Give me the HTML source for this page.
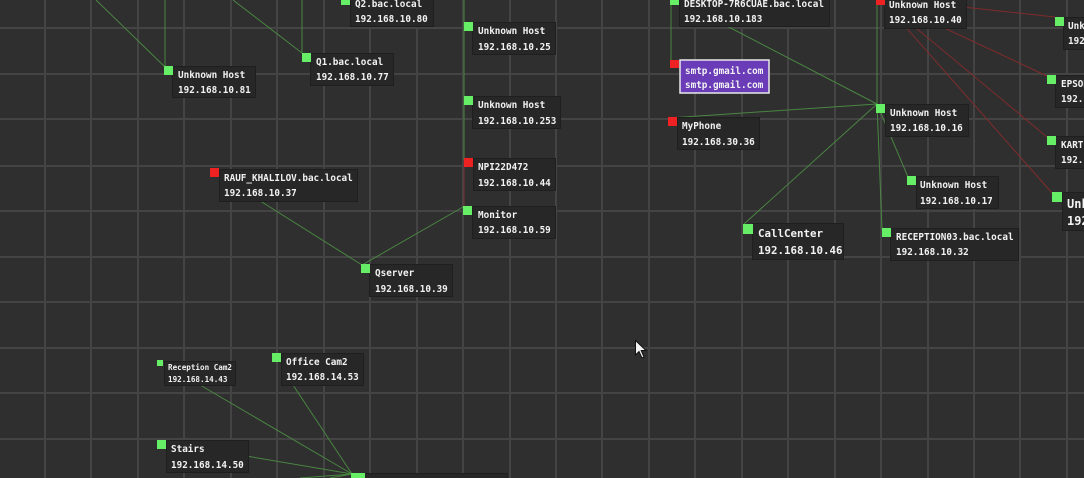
<!DOCTYPE html>
<html><head><meta charset="utf-8"><style>
html,body{margin:0;padding:0;background:#2f2f2f;width:1084px;height:478px;overflow:hidden}
svg{display:block}
text{font-family:"DejaVu Sans Mono","Liberation Mono",monospace;font-weight:bold;fill:#f2f2f2;font-size:9.3px}
.b{fill:#272727;stroke:#1f1f1f;stroke-width:1}
.g{fill:#66ee66}.r{fill:#ee2222}
.eg{stroke:#4a8542;stroke-width:1;fill:none}
.er{stroke:#7f2c2c;stroke-width:1;fill:none}
.L{font-size:10.8px}
.S{font-size:7.6px}
</style></head><body>
<svg width="1084" height="478" viewBox="0 0 1084 478">
<g stroke="#444" stroke-width="2">
<line x1="45" y1="0" x2="45" y2="478"/><line x1="91" y1="0" x2="91" y2="478"/><line x1="138" y1="0" x2="138" y2="478"/><line x1="184" y1="0" x2="184" y2="478"/><line x1="231" y1="0" x2="231" y2="478"/><line x1="277" y1="0" x2="277" y2="478"/><line x1="324" y1="0" x2="324" y2="478"/><line x1="370" y1="0" x2="370" y2="478"/><line x1="417" y1="0" x2="417" y2="478"/><line x1="463" y1="0" x2="463" y2="478"/><line x1="510" y1="0" x2="510" y2="478"/><line x1="556" y1="0" x2="556" y2="478"/><line x1="602" y1="0" x2="602" y2="478"/><line x1="649" y1="0" x2="649" y2="478"/><line x1="695" y1="0" x2="695" y2="478"/><line x1="742" y1="0" x2="742" y2="478"/><line x1="788" y1="0" x2="788" y2="478"/><line x1="835" y1="0" x2="835" y2="478"/><line x1="881" y1="0" x2="881" y2="478"/><line x1="928" y1="0" x2="928" y2="478"/><line x1="974" y1="0" x2="974" y2="478"/><line x1="1020" y1="0" x2="1020" y2="478"/><line x1="1067" y1="0" x2="1067" y2="478"/>
<line x1="0" y1="28" x2="1084" y2="28"/><line x1="0" y1="74" x2="1084" y2="74"/><line x1="0" y1="119" x2="1084" y2="119"/><line x1="0" y1="166" x2="1084" y2="166"/><line x1="0" y1="211" x2="1084" y2="211"/><line x1="0" y1="257" x2="1084" y2="257"/><line x1="0" y1="302" x2="1084" y2="302"/><line x1="0" y1="348" x2="1084" y2="348"/><line x1="0" y1="393" x2="1084" y2="393"/><line x1="0" y1="439" x2="1084" y2="439"/>
</g>
<g class="eg">
<line x1="96" y1="0" x2="165" y2="67"/><line x1="165" y1="0" x2="165" y2="67"/>
<line x1="233" y1="0" x2="302" y2="53"/><line x1="302" y1="0" x2="302" y2="53"/>
<line x1="464" y1="0" x2="464" y2="206"/>
<line x1="463" y1="207" x2="362" y2="265"/><line x1="211" y1="170" x2="362" y2="265"/>
<line x1="671" y1="0" x2="671" y2="61"/><line x1="671" y1="-3" x2="877" y2="104"/>
<line x1="669" y1="118" x2="877" y2="104"/><line x1="744" y1="224" x2="877" y2="104"/>
<line x1="877" y1="104" x2="908" y2="177"/><line x1="877" y1="104" x2="882" y2="229"/><line x1="877" y1="0" x2="877" y2="104"/>
<line x1="158" y1="441" x2="352" y2="474"/><line x1="200" y1="385" x2="352" y2="474"/><line x1="293" y1="385" x2="352" y2="474"/><line x1="300" y1="478" x2="352" y2="474"/><line x1="330" y1="478" x2="352" y2="474"/>
</g>
<g class="er">
<line x1="880" y1="-2" x2="1055" y2="17"/><line x1="880" y1="-2" x2="1047" y2="76"/><line x1="880" y1="-2" x2="1047" y2="137"/><line x1="880" y1="-2" x2="1052" y2="193"/>
<line x1="464" y1="160" x2="464" y2="206" stroke="#7a3030"/>
</g>
<rect class="b" x="172.5" y="66.5" width="83" height="31"/><rect class="g" x="164" y="66" width="9" height="9"/><text x="178" y="78">Unknown Host</text><text x="178" y="93">192.168.10.81</text>
<rect class="b" x="310.5" y="53.5" width="83" height="32"/><rect class="g" x="302" y="53" width="9" height="9"/><text x="316" y="65">Q1.bac.local</text><text x="316" y="80">192.168.10.77</text>
<rect class="b" x="350.5" y="-6.5" width="83" height="33"/><rect class="g" x="341" y="-4" width="9" height="9"/><text x="355" y="7">Q2.bac.local</text><text x="355" y="22">192.168.10.80</text>
<rect class="b" x="472.5" y="22.5" width="83" height="32"/><rect class="g" x="464" y="22" width="9" height="9"/><text x="478" y="34">Unknown Host</text><text x="478" y="50">192.168.10.25</text>
<rect class="b" x="472.5" y="96.5" width="88" height="32"/><rect class="g" x="464" y="96" width="9" height="9"/><text x="478" y="108">Unknown Host</text><text x="478" y="124">192.168.10.253</text>
<rect class="b" x="473.5" y="158.5" width="82" height="32"/><rect class="r" x="464" y="158" width="9" height="9"/><text x="478" y="170">NPI22D472</text><text x="478" y="186">192.168.10.44</text>
<rect class="b" x="219.5" y="169.5" width="138" height="32"/><rect class="r" x="210" y="168" width="9" height="9"/><text x="224" y="181">RAUF_KHALILOV.bac.local</text><text x="224" y="196">192.168.10.37</text>
<rect class="b" x="472.5" y="206.5" width="83" height="32"/><rect class="g" x="463" y="206" width="9" height="9"/><text x="478" y="218">Monitor</text><text x="478" y="233">192.168.10.59</text>
<rect class="b" x="369.5" y="264.5" width="83" height="32"/><rect class="g" x="361" y="264" width="9" height="9"/><text x="375" y="276">Qserver</text><text x="375" y="292">192.168.10.39</text>
<rect class="b" x="679.5" y="-6.5" width="150" height="33"/><rect class="g" x="670" y="-4" width="9" height="9"/><text x="684" y="7">DESKTOP-7R6CUAE.bac.local</text><text x="684" y="22">192.168.10.183</text>
<rect x="680" y="60" width="89" height="33" fill="#6a3cb8" stroke="#e8e8e8" stroke-width="1.5"/><rect class="r" x="670" y="60" width="9" height="8"/><text x="685" y="74">smtp.gmail.com</text><text x="685" y="88">smtp.gmail.com</text>
<rect class="b" x="677.5" y="117.5" width="82" height="32"/><rect class="r" x="668" y="117" width="9" height="9"/><text x="682" y="129">MyPhone</text><text x="682" y="145">192.168.30.36</text>
<rect class="b" x="885.5" y="104.5" width="83" height="32"/><rect class="g" x="876" y="104" width="9" height="9"/><text x="890" y="116">Unknown Host</text><text x="890" y="131">192.168.10.16</text>
<rect class="b" x="884.5" y="-4.5" width="82" height="33"/><rect class="r" x="876" y="-4" width="9" height="9"/><text x="889" y="8">Unknown Host</text><text x="889" y="23">192.168.10.40</text>
<rect class="b" x="916.5" y="176.5" width="82" height="32"/><rect class="g" x="907" y="176" width="9" height="9"/><text x="920" y="188">Unknown Host</text><text x="920" y="204">192.168.10.17</text>
<rect class="b" x="752.5" y="223.5" width="91" height="36"/><rect class="g" x="743" y="224" width="10" height="10"/><text class="L" x="758" y="237">CallCenter</text><text class="L" x="758" y="254">192.168.10.46</text>
<rect class="b" x="890.5" y="228.5" width="128" height="32"/><rect class="g" x="882" y="228" width="9" height="9"/><text x="896" y="240">RECEPTION03.bac.local</text><text x="896" y="255">192.168.10.32</text>
<rect class="b" x="1063.5" y="17.5" width="30" height="32"/><rect class="g" x="1055" y="17" width="9" height="9"/><text x="1068" y="29">Unknown Host</text><text x="1068" y="44">192.168.10.1</text>
<rect class="b" x="1055.5" y="75.5" width="40" height="32"/><rect class="g" x="1047" y="75" width="9" height="9"/><text x="1061" y="87">EPSON</text><text x="1061" y="102">192.168.10.1</text>
<rect class="b" x="1055.5" y="136.5" width="40" height="32"/><rect class="g" x="1047" y="136" width="9" height="9"/><text x="1061" y="148">KARTI</text><text x="1061" y="163">192.168.10.1</text>
<rect class="b" x="1062.5" y="192.5" width="40" height="38"/><rect class="g" x="1052" y="192" width="10" height="10"/><text x="1067" y="208" style="font-size:12px">Unknown</text><text x="1067" y="225" style="font-size:12px">192</text>
<rect class="b" x="164.5" y="361.5" width="71" height="24"/><rect class="g" x="157" y="360" width="6" height="6"/><text class="S" x="168" y="370">Reception Cam2</text><text class="S" x="168" y="382">192.168.14.43</text>
<rect class="b" x="281.5" y="353.5" width="82" height="32"/><rect class="g" x="272" y="353" width="9" height="9"/><text x="286" y="365">Office Cam2</text><text x="286" y="380">192.168.14.53</text>
<rect class="b" x="166.5" y="440.5" width="82" height="32"/><rect class="g" x="157" y="440" width="9" height="9"/><text x="171" y="452">Stairs</text><text x="171" y="468">192.168.14.50</text>
<rect class="b" x="362.5" y="473.5" width="145" height="10"/><rect class="g" x="351" y="473" width="14" height="10"/>
<path d="M635.5 340.5 L635.5 355 L639 351.5 L642 358 L644 357 L641.2 350.5 L646 350.5 Z" fill="#f4f4f4" stroke="#111" stroke-width="1"/>
</svg>
</body></html>
